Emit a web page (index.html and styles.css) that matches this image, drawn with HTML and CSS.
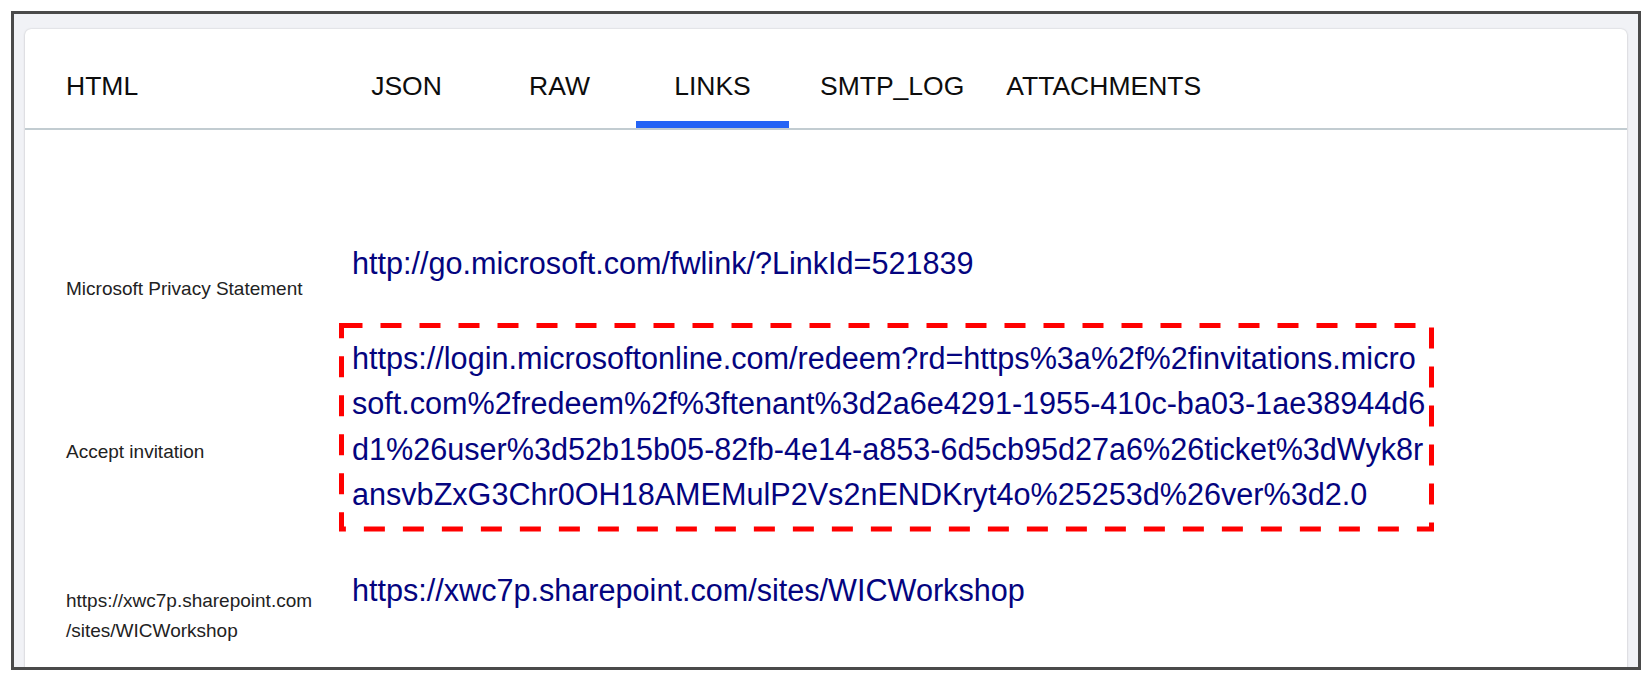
FILE: index.html
```html
<!DOCTYPE html>
<html lang="en">
<head>
<meta charset="utf-8">
<title>Links</title>
<link rel="stylesheet" href="styles.css">
</head>
<body>
<div class="frame">
  <div class="card">
    <nav class="tabs">
      <div class="tab tab-first">HTML</div>
      <div class="tab">JSON</div>
      <div class="tab">RAW</div>
      <div class="tab active">LINKS</div>
      <div class="tab tab-gap">SMTP_LOG</div>
      <div class="tab">ATTACHMENTS</div>
    </nav>
    <div class="links">
      <div class="row row-first">
        <div class="label">Microsoft Privacy Statement</div>
        <div class="value"><a class="link" href="#">http://go.microsoft.com/fwlink/?LinkId=521839</a></div>
      </div>
      <div class="row">
        <div class="label">Accept invitation</div>
        <div class="value marked">
          <a class="link" href="#">https://login.microsoftonline.com/redeem?rd=https%3a%2f%2finvitations.microsoft.com%2fredeem%2f%3ftenant%3d2a6e4291-1955-410c-ba03-1ae38944d6d1%26user%3d52b15b05-82fb-4e14-a853-6d5cb95d27a6%26ticket%3dWyk8ransvbZxG3Chr0OH18AMEMulP2Vs2nENDKryt4o%25253d%26ver%3d2.0</a>
          <svg class="dash" aria-hidden="true"><rect></rect></svg>
        </div>
      </div>
      <div class="row">
        <div class="label">https://xwc7p.sharepoint.com/sites/WICWorkshop</div>
        <div class="value"><a class="link" href="#">https://xwc7p.sharepoint.com/sites/WICWorkshop</a></div>
      </div>
    </div>
  </div>
</div>
</body>
</html>
```
FILE: styles.css
```css
html, body {
  margin: 0;
  padding: 0;
  background: #ffffff;
}

body {
  font-family: "Liberation Sans", Arial, Helvetica, sans-serif;
}

.frame {
  margin: 11px 9px 0 11px;
  width: 1630px;
  height: 659px;
  box-sizing: border-box;
  border: 3px solid #4a4a4a;
  background: #f1f2f6;
  overflow: hidden;
  padding: 15px 11px 0 11px;
}

.card {
  background: #ffffff;
  border-radius: 6px;
  height: 700px;
  box-shadow: 0 0 2px rgba(0, 0, 0, 0.18), 0 1px 3px rgba(0, 0, 0, 0.08);
}

.tabs {
  display: flex;
  padding-left: 41px;
  border-bottom: 2px solid #c2ccd1;
}

.tab {
  box-sizing: border-box;
  min-width: 153px;
  padding: 42px 21px 20px 21px;
  border-bottom: 7px solid transparent;
  font-size: 26.5px;
  line-height: 30px;
  color: #0d0d0d;
  text-align: center;
  white-space: nowrap;
}

.tab-first {
  width: 264px;
  padding-left: 0;
  padding-right: 0;
  text-align: left;
}

.tab-gap {
  margin-left: 10px;
}

.tab.active {
  border-bottom-color: #2463f5;
}

.links {
  padding: 98px 0 0 41px;
  display: flex;
  flex-direction: column;
  gap: 24px;
}

.row-first {
  margin-bottom: -1px;
}

.row {
  display: grid;
  grid-template-columns: 249px 1095px;
  column-gap: 24px;
  align-items: center;
}

.label {
  font-size: 19px;
  line-height: 30px;
  color: #222222;
  line-break: anywhere;
  padding-top: 25px;
  margin-bottom: -25px;
}

.value {
  position: relative;
  padding: 13px 6px 13px 13px;
  font-size: 30.6px;
  line-height: 45.6px;
  line-break: anywhere;
  word-break: break-all;
}

.link {
  color: #04047f;
  text-decoration: none;
}

.dash {
  position: absolute;
  left: 0;
  top: 0;
  width: 100%;
  height: 100%;
  overflow: visible;
  pointer-events: none;
}

.dash rect {
  x: 2.5px;
  y: 2.5px;
  width: calc(100% - 5px);
  height: calc(100% - 5px);
  fill: none;
  stroke: #ff0000;
  stroke-width: 5px;
  stroke-dasharray: 21 18;
  stroke-dashoffset: 0;
}
```
